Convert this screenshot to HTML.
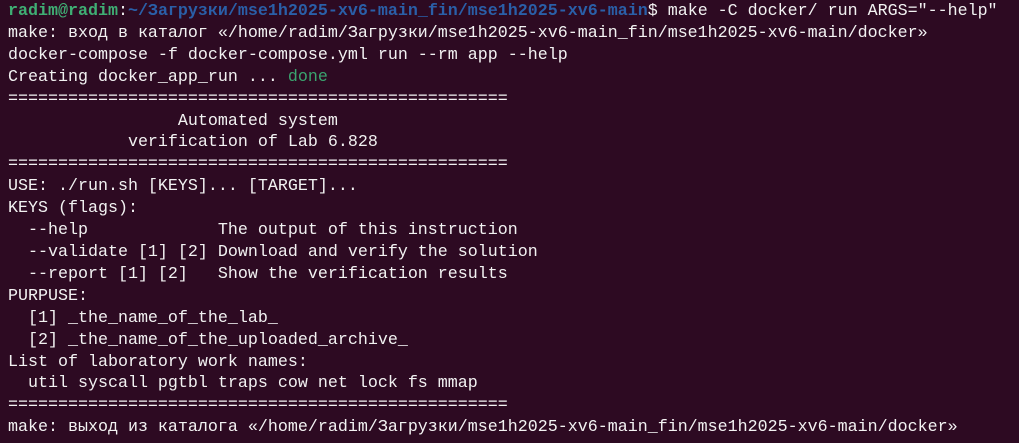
<!DOCTYPE html>
<html><head><meta charset="utf-8"><style>
html,body{margin:0;padding:0;width:1019px;height:443px;overflow:hidden;background:#2d0a22;}
pre{margin:0;padding:1px 0 0 8px;font-family:"Liberation Mono","DejaVu Sans Mono",monospace;font-size:16.67px;line-height:21.9px;color:#f2f2f2;white-space:pre;}
.g{color:#3fae74;font-weight:bold}
.b{color:#2a5fa8;font-weight:bold}
.d{color:#3aa46f}
</style></head><body><pre><span class="g">radim@radim</span>:<span class="b">~/Загрузки/mse1h2025-xv6-main_fin/mse1h2025-xv6-main</span>$ make -C docker/ run ARGS="--help"
make: вход в каталог «/home/radim/Загрузки/mse1h2025-xv6-main_fin/mse1h2025-xv6-main/docker»
docker-compose -f docker-compose.yml run --rm app --help
Creating docker_app_run ... <span class="d">done</span>
==================================================
                 Automated system
            verification of Lab 6.828
==================================================
USE: ./run.sh [KEYS]... [TARGET]...
KEYS (flags):
  --help             The output of this instruction
  --validate [1] [2] Download and verify the solution
  --report [1] [2]   Show the verification results
PURPUSE:
  [1] _the_name_of_the_lab_
  [2] _the_name_of_the_uploaded_archive_
List of laboratory work names:
  util syscall pgtbl traps cow net lock fs mmap
==================================================
make: выход из каталога «/home/radim/Загрузки/mse1h2025-xv6-main_fin/mse1h2025-xv6-main/docker»
</pre></body></html>
